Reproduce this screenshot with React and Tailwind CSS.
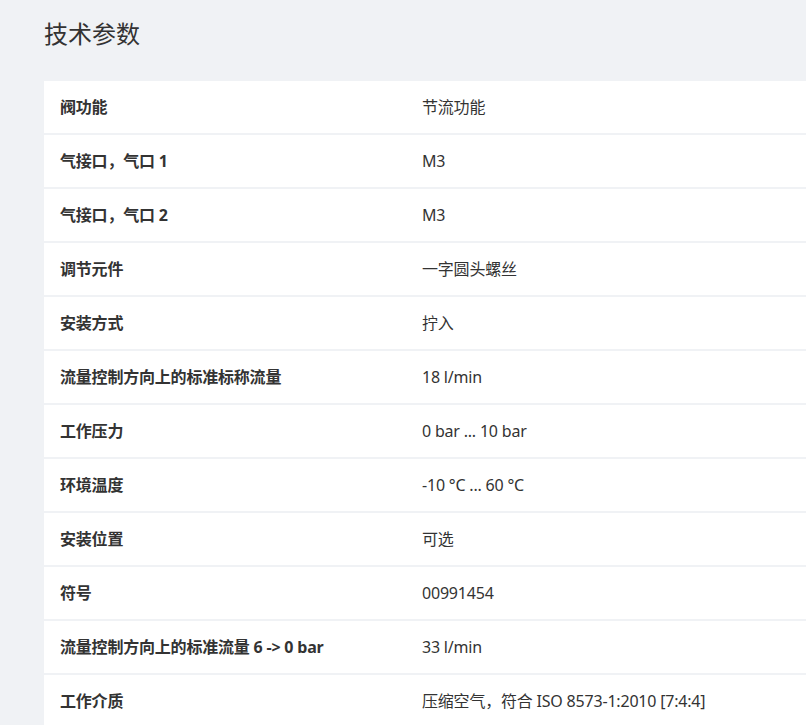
const rows = [
  ["阀功能", "节流功能"],
  ["气接口，气口 1", "M3"],
  ["气接口，气口 2", "M3"],
  ["调节元件", "一字圆头螺丝"],
  ["安装方式", "拧入"],
  ["流量控制方向上的标准标称流量", "18 l/min"],
  ["工作压力", "0 bar ... 10 bar"],
  ["环境温度", "-10 °C ... 60 °C"],
  ["安装位置", "可选"],
  ["符号", "00991454"],
  ["流量控制方向上的标准流量 6 -> 0 bar", "33 l/min"],
  ["工作介质", "压缩空气，符合 ISO 8573-1:2010 [7:4:4]"],
];

export default function App() {
  return (
    <div
      className="min-h-[725px] bg-[#f0f2f5] pl-[44px] text-[#333] overflow-hidden"
      style={{ fontFamily: '"Noto Sans", "Noto Sans CJK SC", sans-serif' }}
    >
      <h2 className="pt-[16px] h-[81px] text-[24px] leading-[36px] text-[#333]">技术参数</h2>
      <div className="flex flex-col gap-[2px]">
        {rows.map(([k, v]) => (
          <div key={k} className="flex h-[52px] items-center bg-white text-[16px] tracking-[-0.2px]">
            <div className="w-[378px] pl-[16px] font-bold">{k}</div>
            <div>{v}</div>
          </div>
        ))}
      </div>
    </div>
  );
}
